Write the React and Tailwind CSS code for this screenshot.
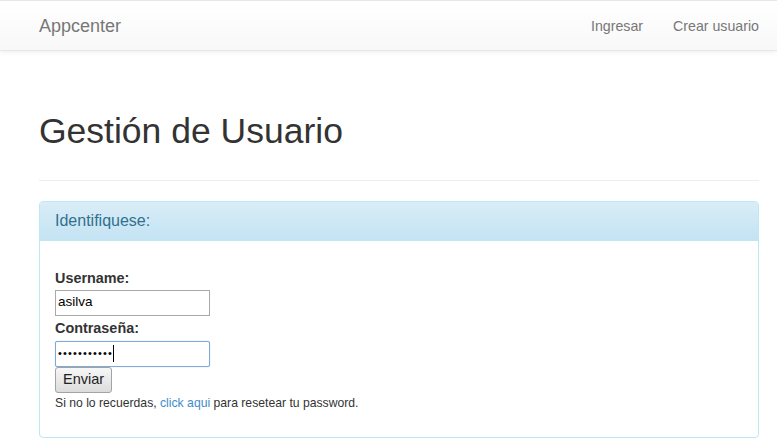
import React from "react";

// Appcenter — Gestión de Usuario (Bootstrap 3 theme look)

const font = { fontFamily: '"Liberation Sans", Arial, Helvetica, sans-serif' };

const navLinks = ["Ingresar", "Crear usuario"];

export default function App() {
  return (
    <div className="min-h-[446px] bg-white text-[14px] text-[#333]" style={font}>
      {/* Navbar */}
      <header className="h-[51px] border-t border-b border-[#e7e7e7] bg-linear-to-b from-white to-[#f8f8f8] shadow-[0_1px_5px_rgba(0,0,0,0.075)]">
        <div className="flex h-full items-center justify-between pl-[39px] pr-[18px]">
          <a href="#" className="text-[18px] leading-[20px] text-[#777]">
            Appcenter
          </a>
          <nav className="mr-[-15px] flex">
            {navLinks.map((name) => (
              <a key={name} href="#" className="px-[15px] text-[14.2px] leading-[20px] text-[#777]">
                {name}
              </a>
            ))}
          </nav>
        </div>
      </header>

      <main className="pl-[39px] pr-[18px]">
        {/* Page header */}
        <div className="mt-[60px] border-b border-[#eee] pb-[29px]">
          <h1 className="text-[35.5px] leading-[40px] font-normal text-[#333]">Gestión de Usuario</h1>
        </div>

        {/* Panel */}
        <section className="mt-[20px] rounded-[4px] border border-[#bce8f1]">
          <div className="rounded-t-[3px] border-b border-[#bce8f1] bg-linear-to-b from-[#d9edf7] to-[#c4e3f3] px-[15px] py-[10px]">
            <h3 className="text-[16px] leading-[17.6px] text-[#31708f]">Identifiquese:</h3>
          </div>
          <div className="px-[15px] pt-[27px] pb-[25px]">
            <form onSubmit={(e) => e.preventDefault()}>
              <label className="block text-[14.4px] font-bold leading-[20px] text-[#333]">Username:</label>
              <div className="mt-[2px] flex h-[26px] w-[155px] items-center border border-[#a9a9a9] bg-white px-[2px] text-[13.5px] text-black">
                asilva
              </div>
              <label className="mt-[2px] block text-[14.4px] font-bold leading-[20px] text-[#333]">Contraseña:</label>
              <div className="mt-[3px] flex h-[26px] w-[155px] items-center rounded-[2px] border border-[#7eaad8] bg-white px-[2px] text-[11px] text-black shadow-[0_0_1px_rgba(82,148,220,0.6)]">
                <span className="leading-none tracking-[1.15px]">•••••••••••</span>
                <span className="h-[17px] w-px bg-black" />
              </div>
              <button
                type="submit"
                className="flex h-[26px] items-center rounded-[3px] border border-[#a3a3a3] bg-linear-to-b from-[#f7f7f7] to-[#dcdcdc] px-[7px] text-[14.5px] text-[#222]"
              >
                Enviar
              </button>
              <p className="mt-[2px] text-[12.2px] leading-[17px] text-[#333]">
                Si no lo recuerdas, <a href="#" className="text-[#428bca]">click aqui</a> para resetear tu password.
              </p>
            </form>
          </div>
        </section>
      </main>
    </div>
  );
}
